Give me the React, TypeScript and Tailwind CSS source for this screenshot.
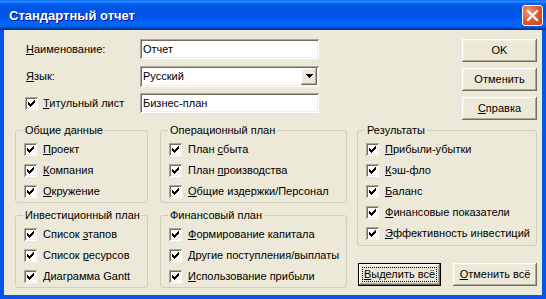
import React from "react";

type Label = [string, string, string];

const font = "font-['Liberation_Sans',Arial,sans-serif]";
const sunken =
  "shadow-[inset_1px_1px_0_#ACA899,inset_-1px_-1px_0_#FFFFFF,inset_2px_2px_0_#716F64,inset_-2px_-2px_0_#F1EFE2]";
const raised =
  "shadow-[inset_-1px_-1px_0_#716F64,inset_1px_1px_0_#FFFFFF,inset_-2px_-2px_0_#ACA899,inset_2px_2px_0_#F1EFE2]";

const common: Label[] = [
  ["", "П", "роект"],
  ["", "К", "омпания"],
  ["", "О", "кружение"],
];
const ops: Label[] = [
  ["План ", "с", "быта"],
  ["План ", "п", "роизводства"],
  ["", "О", "бщие издержки/Персонал"],
];
const invest: Label[] = [
  ["Список ", "э", "тапов"],
  ["Список ", "р", "есурсов"],
  ["", "Д", "иаграмма Gantt"],
];
const fin: Label[] = [
  ["", "Ф", "ормирование капитала"],
  ["", "Д", "ругие поступления/выплаты"],
  ["", "И", "спользование прибыли"],
];
const results: Label[] = [
  ["", "П", "рибыли-убытки"],
  ["", "К", "эш-фло"],
  ["", "Б", "аланс"],
  ["", "Ф", "инансовые показатели"],
  ["", "Э", "ффективность инвестиций"],
];

function Text({ l }: { l: Label }) {
  return (
    <span className="whitespace-nowrap">
      {l[0]}
      <u className="underline-offset-[1px]">{l[1]}</u>
      {l[2]}
    </span>
  );
}

// classic 13x13 checkbox with pixel checkmark
function Check() {
  const starts = [2, 3, 4, 3, 2, 1, 0];
  return (
    <div className={`w-[13px] h-[13px] shrink-0 bg-white ${sunken}`}>
      <svg width="13" height="13" viewBox="0 0 13 13" shapeRendering="crispEdges">
        {starts.map((s, c) => (
          <rect key={c} x={3 + c} y={3 + s} width="1" height="3" fill="#000" />
        ))}
      </svg>
    </div>
  );
}

function Group({ title, items, className = "" }: { title: string; items: Label[]; className?: string }) {
  return (
    <fieldset className={`border border-[#D0D0BF] rounded-[3px] ${className}`}>
      <legend className="ml-[7px] px-[2px] leading-[13px]">{title}</legend>
      <div className="flex flex-col pt-[2px] pl-[8px]">
        {items.map((it, i) => (
          <div key={i} className="h-[21px] flex items-center gap-[6px]">
            <Check />
            <Text l={it} />
          </div>
        ))}
      </div>
    </fieldset>
  );
}

function Button({ children, className = "" }: { children: React.ReactNode; className?: string }) {
  return (
    <div className={`h-[23px] flex items-center justify-center bg-[#ECE9D8] ${raised} ${className}`}>
      {children}
    </div>
  );
}

function TitleBar() {
  return (
    <div className="h-[30px] shrink-0 flex items-center justify-between pl-[9px] pr-[3px] bg-[linear-gradient(180deg,#0058EE_0%,#3593FF_4%,#288EFF_6%,#127DFF_8%,#036FFC_10%,#0262EE_14%,#0057E5_20%,#0054E3_24%,#0055EB_56%,#005BF5_66%,#026AFE_76%,#0062EF_86%,#0052D6_92%,#0040AB_94%,#003092_100%)]">
      <span className="text-white font-bold text-[13px] [text-shadow:1px_1px_0_#0F1089]">
        Стандартный отчет
      </span>
      <div className="w-[21px] h-[21px] rounded-[3px] border border-white bg-[radial-gradient(circle_at_30%_30%,#F19A7A_0%,#E2582E_50%,#C4401B_100%)] flex items-center justify-center">
        <svg width="13" height="13" viewBox="0 0 13 13">
          <path d="M2 2 L11 11 M11 2 L2 11" stroke="#fff" strokeWidth="2.2" strokeLinecap="square" />
        </svg>
      </div>
    </div>
  );
}

export default function App() {
  return (
    <div className={`w-[546px] h-[299px] flex flex-col text-[11px] leading-[13px] text-black ${font}`}>
      <TitleBar />
      <div className="flex-1 flex gap-[10px] bg-[#ECE9D8] border-x-4 border-b-4 border-[#0556E6] pt-[9px] pl-[11px] pr-[5px]">
        <div className="w-[332px] flex flex-col">
          <div className="flex flex-col gap-[7px] pl-[11px]">
            <div className="h-[20px] flex items-center">
              <span className="w-[114px]">
                <u className="underline-offset-[1px]">Н</u>аименование:
              </span>
              <div className={`w-[179px] h-[20px] bg-white flex items-center pl-[3px] ${sunken}`}>Отчет</div>
            </div>
            <div className="h-[20px] flex items-center">
              <span className="w-[114px]">
                <u className="underline-offset-[1px]">Я</u>зык:
              </span>
              <div className={`w-[179px] h-[21px] bg-white flex items-center justify-between pl-[3px] pr-[2px] ${sunken}`}>
                <span>Русский</span>
                <div className={`w-[16px] h-[17px] bg-[#ECE9D8] flex items-center justify-center ${raised}`}>
                  <svg width="7" height="4" viewBox="0 0 7 4" shapeRendering="crispEdges">
                    <path d="M0 0H7V1H6V2H5V3H4V4H3V3H2V2H1V1H0Z" fill="#000" />
                  </svg>
                </div>
              </div>
            </div>
            <div className="h-[20px] flex items-center">
              <div className="w-[114px] flex items-center gap-[5px] -ml-[1px]">
                <Check />
                <span>
                  <u className="underline-offset-[1px]">Т</u>итульный лист
                </span>
              </div>
              <div className={`w-[179px] h-[20px] bg-white flex items-center pl-[3px] ml-[1px] ${sunken}`}>Бизнес-план</div>
            </div>
          </div>
          <div className="grid grid-cols-[133px_187px] gap-x-[12px] gap-y-[6px] mt-[11px]">
            <Group title="Общие данные" items={common} />
            <Group title="Операционный план" items={ops} />
            <Group title="Инвестиционный план" items={invest} />
            <Group title="Финансовый план" items={fin} />
          </div>
        </div>
        <div className="w-[180px] flex flex-col">
          <div className="flex flex-col items-end gap-[6px]">
            <Button className="w-[75px]">OK</Button>
            <Button className="w-[75px]">Отменить</Button>
            <Button className="w-[75px]">
              <span>
                <u className="underline-offset-[1px]">С</u>правка
              </span>
            </Button>
          </div>
          <Group title="Результаты" items={results} className="mt-[4px] pb-[1px]" />
          <div className="flex gap-[12px] pl-[1px] mt-[17px]">
            <div className="w-[83px] h-[23px] border border-black">
              <div className={`w-full h-full bg-[#ECE9D8] p-[3px] ${raised}`}>
                <div className="w-full h-full border border-dotted border-black flex items-center justify-center">
                  <Text l={["", "В", "ыделить всё"]} />
                </div>
              </div>
            </div>
            <Button className="w-[84px]">
              <Text l={["", "О", "тменить всё"]} />
            </Button>
          </div>
        </div>
      </div>
    </div>
  );
}
